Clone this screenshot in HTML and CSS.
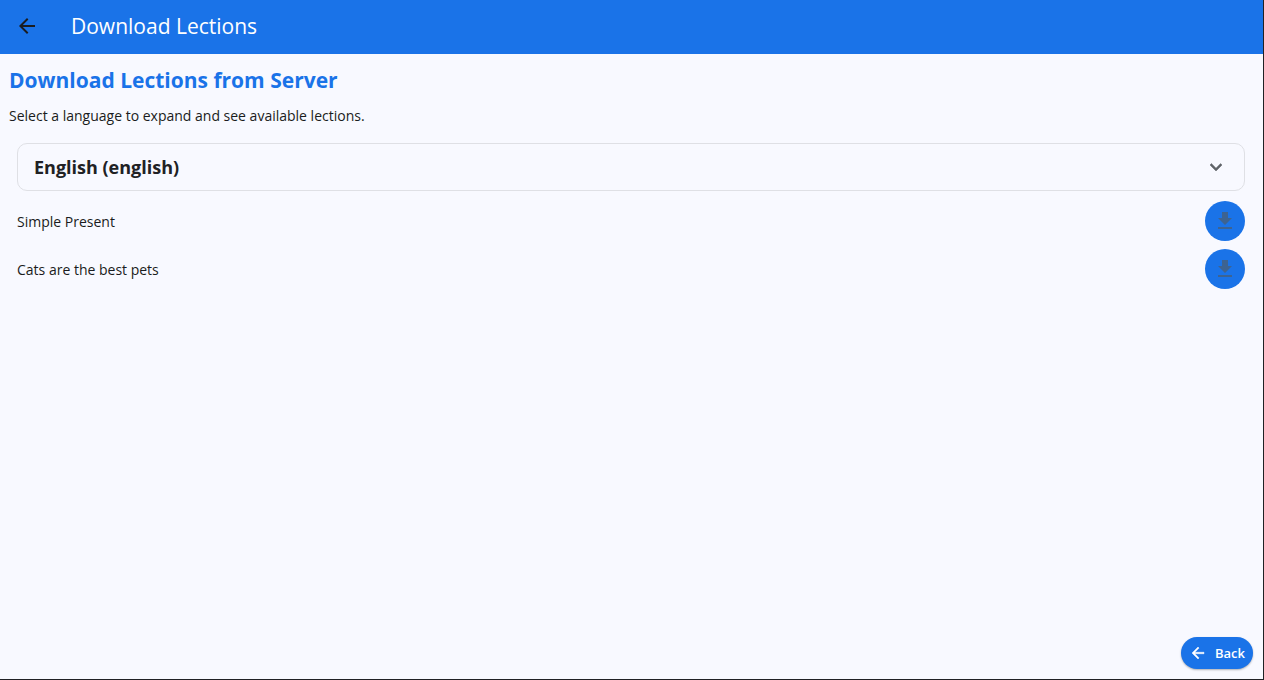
FILE: index.html
```html
<!DOCTYPE html>
<html lang="en">
<head>
<meta charset="utf-8">
<title>Download Lections</title>
<link rel="stylesheet" href="styles.css">
</head>
<body>
<div class="app">
  <header class="app-bar">
    <button class="nav-back" type="button" aria-label="Go back">
      <svg viewBox="0 0 24 24" width="24" height="24" fill="currentColor"><path d="M20 11H7.83l5.59-5.59L12 4l-8 8 8 8 1.41-1.41L7.83 13H20v-2z"/></svg>
    </button>
    <h1 class="app-title">Download Lections</h1>
  </header>
  <main class="content">
    <h2 class="heading">Download Lections from Server</h2>
    <p class="hint">Select a language to expand and see available lections.</p>
    <section class="languages">
      <button class="language" type="button" aria-expanded="true" aria-controls="lections">
        <span>English (english)</span>
        <svg class="chevron" viewBox="0 0 24 24" width="24" height="24" fill="currentColor" stroke="currentColor" stroke-width="0.5"><path d="M7.41 8.59 12 13.17l4.59-4.58L18 10l-6 6-6-6 1.41-1.41z"/></svg>
      </button>
      <ul class="lections" id="lections">
        <li class="lection">
          <span>Simple Present</span>
          <button class="download" type="button" aria-label="Download Simple Present">
            <svg viewBox="0 0 24 24" width="24" height="24" fill="currentColor"><path d="M19 9h-4V3H9v6H5l7 7 7-7zM5 18v2h14v-2H5z"/></svg>
          </button>
        </li>
        <li class="lection">
          <span>Cats are the best pets</span>
          <button class="download" type="button" aria-label="Download Cats are the best pets">
            <svg viewBox="0 0 24 24" width="24" height="24" fill="currentColor"><path d="M19 9h-4V3H9v6H5l7 7 7-7zM5 18v2h14v-2H5z"/></svg>
          </button>
        </li>
      </ul>
    </section>
  </main>
  <footer class="footer">
    <button class="back" type="button">
      <svg viewBox="0 0 24 24" width="18" height="18" fill="currentColor" stroke="currentColor" stroke-width="0.6"><path d="M20 11H7.83l5.59-5.59L12 4l-8 8 8 8 1.41-1.41L7.83 13H20v-2z"/></svg>
      <span>Back</span>
    </button>
  </footer>
</div>
</body>
</html>
```
FILE: styles.css
```css
* {
  box-sizing: border-box;
}

body {
  margin: 0;
  font-family: "Segoe UI", "Open Sans", "Noto Sans", sans-serif;
  font-size: 14px;
  color: #1a1c20;
}

button {
  border: 0;
  padding: 0;
  font: inherit;
  cursor: pointer;
}

svg {
  display: block;
}

.app {
  display: flex;
  flex-direction: column;
  min-height: 100vh;
  background: #f8f9ff;
  border-right: 1px solid #202124;
  border-bottom: 1px solid #202124;
}

.app-bar {
  display: flex;
  align-items: center;
  gap: 24px;
  height: 54px;
  padding: 0 7px 2px;
  background: #1a73e8;
}

.nav-back {
  display: grid;
  place-items: center;
  width: 40px;
  height: 40px;
  border-radius: 50%;
  background: transparent;
  color: #1a1c20;
}

.app-title {
  margin: 0;
  font-size: 21px;
  font-weight: 400;
  line-height: 28px;
  color: #fff;
}

.content {
  flex: 1;
  padding: 12px 9px;
}

.heading {
  margin: 0;
  font-size: 21px;
  font-weight: 700;
  line-height: 28px;
  color: #1a73e8;
}

.hint {
  margin: 12px 0 0;
  line-height: 20px;
}

.languages {
  padding: 17px 9px 0 8px;
}

.language {
  display: flex;
  align-items: center;
  justify-content: space-between;
  width: 100%;
  height: 48px;
  padding: 0 16px;
  border: 1px solid #dfe0e5;
  border-radius: 10px;
  background: transparent;
  color: #202124;
  font-size: 18px;
  font-weight: 700;
}

.chevron {
  color: #5f6368;
}

.lections {
  display: grid;
  gap: 8px;
  margin: 10px 0 0;
  padding: 0;
  list-style: none;
}

.lection {
  display: flex;
  align-items: center;
  justify-content: space-between;
}

.download {
  display: grid;
  place-items: center;
  width: 40px;
  height: 40px;
  border-radius: 50%;
  background: #1a73e8;
  color: #3d6391;
}

.footer {
  display: flex;
  justify-content: flex-end;
  padding: 10px;
}

.back {
  display: flex;
  align-items: center;
  gap: 8px;
  height: 32px;
  padding: 0 8px;
  border-radius: 16px;
  background: #1a73e8;
  box-shadow: 0 1px 2px rgba(0, 0, 0, 0.3);
  color: #fff;
  font-size: 13px;
  font-weight: 600;
}
```
